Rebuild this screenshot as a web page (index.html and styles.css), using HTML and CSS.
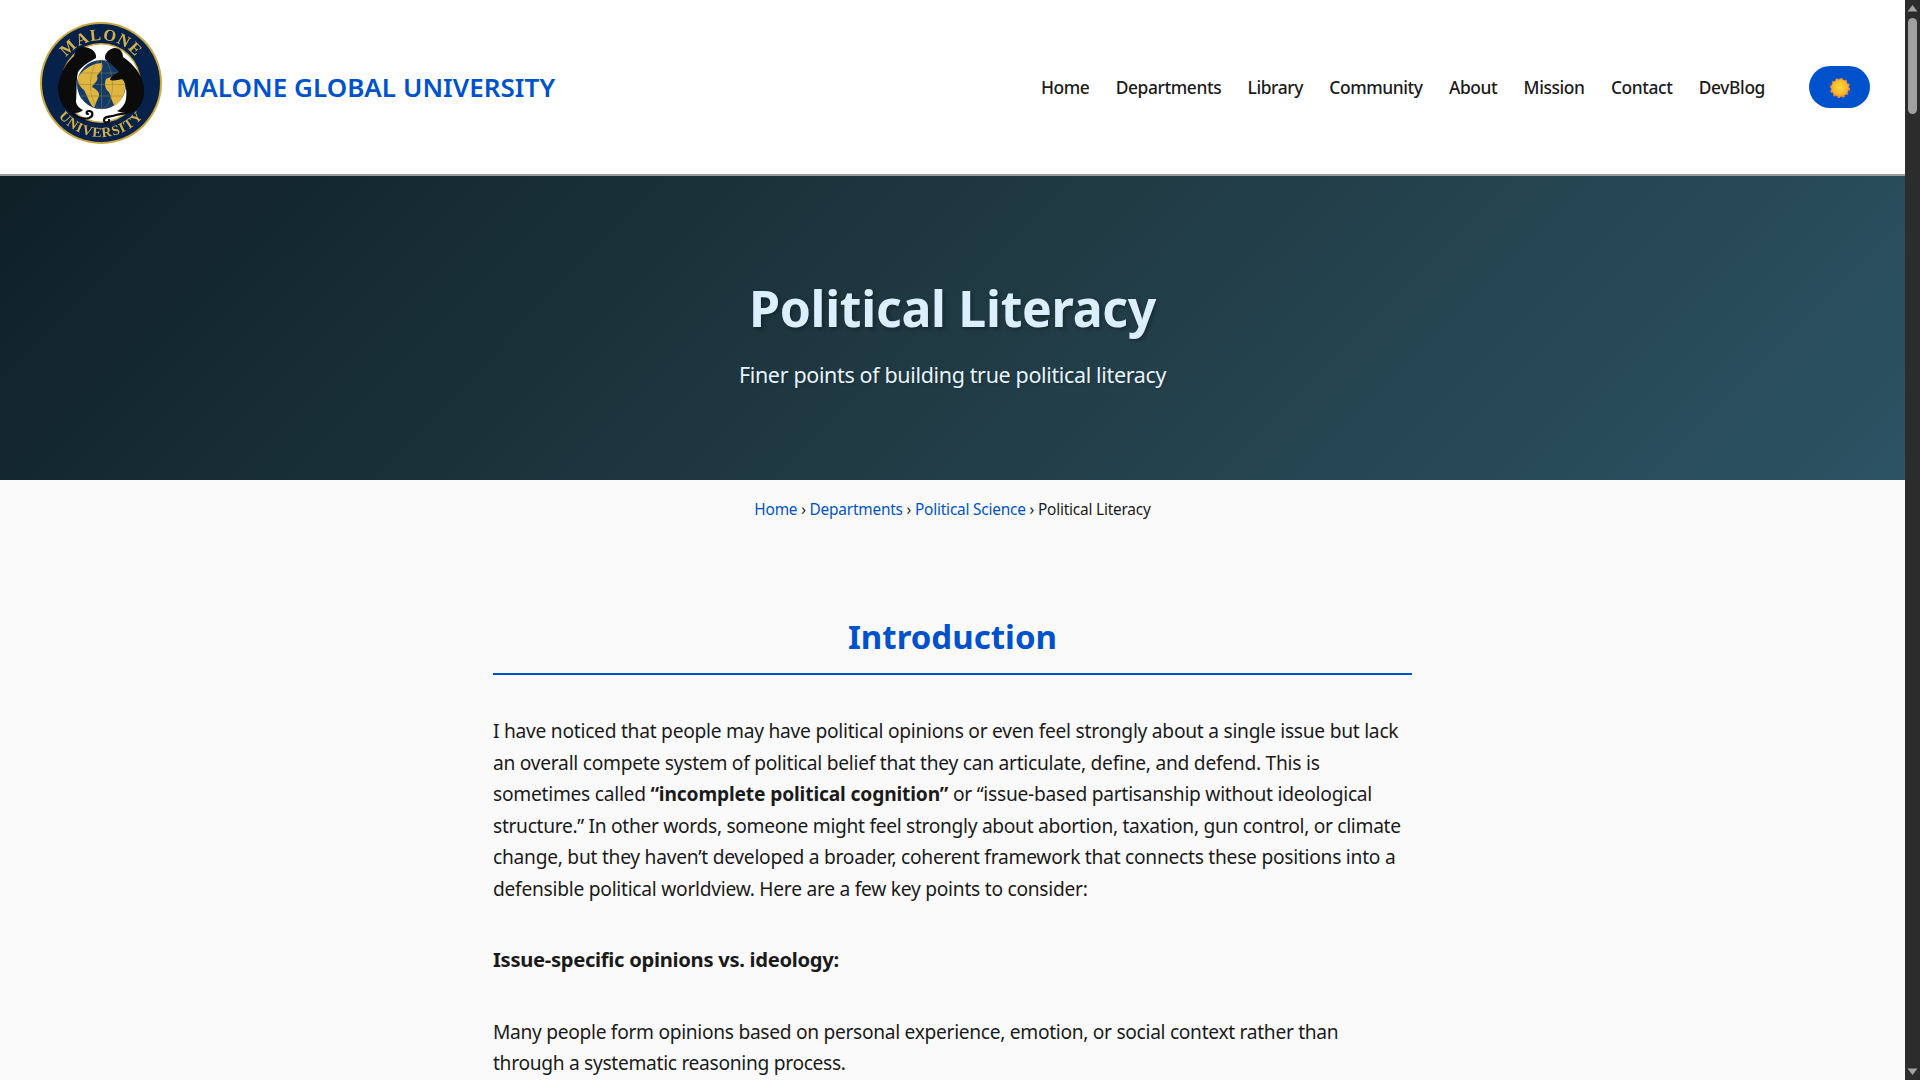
FILE: index.html
```html
<!DOCTYPE html>
<html lang="en">
<head>
<meta charset="utf-8">
<title>Political Literacy</title>
<link rel="stylesheet" href="styles.css">
</head>
<body>
<div class="page">
  <header class="site-header">
    <a class="brand" href="#">
      <svg class="logo" viewBox="-65 -65 130 130" aria-label="Malone University seal">
        <defs>
          <path id="arcTop" d="M-43,0 A43,43 0 0 1 43,0"/>
          <path id="arcBottom" d="M-54,0 A54,54 0 0 0 54,0"/>
        </defs>
        <g class="seal">
          <circle r="61" fill="#c9a63f"/>
          <circle r="59" fill="#06214a"/>
          <circle r="40" fill="#c9a63f"/>
          <circle r="38.5" fill="#ffffff"/>
          <circle cx=".5" cy="1.5" r="24.5" fill="#123a6b"/>
          <path d="M-23,-6 C-16,-16 -6,-20 1,-20 C3,-13 -2,-11 -4,-7 C-2,-2 -7,0 -9,4 C-5,6 -1,9 -2,13 C-4,18 -6,22 -7,25 C-12,20 -14,12 -17,7 C-20,5 -24,0 -23,-6 Z" fill="#e0b540"/>
          <path d="M5,-4 C12,-8 21,-7 24,0 C25,8 22,17 14,23 C11,20 10,13 8,9 C4,7 3,0 5,-4 Z" fill="#e0b540"/>
          <g fill="none" stroke="#8f8138" stroke-width=".5">
            <ellipse cx=".5" cy="1.5" rx="11" ry="24.5"/>
            <path d="M.5,-23 V26 M-23,1.5 H24 M-20,-10 H21 M-20,13 H21"/>
          </g>
          <path d="M-5,-25 C-4,-31 -10,-36 -18,-36 C-23,-36 -26,-32 -27,-27 C-36,-19 -43,-6 -43,7 C-42,17 -38,25 -31,29 C-26,31 -21,30 -18,27 C-22,25 -25,22 -25,18 C-24,8 -25,-3 -23,-11 C-18,-18 -12,-21 -5,-25 Z" fill="#0b0b0b"/>
          <path d="M4,-24 C3,-30 9,-35 14,-35 C19,-35 22,-31 22,-26 C33,-19 44,-5 43,9 C43,18 39,25 33,28 C29,30 21,30 16,28 C20,26 24,22 25,16 C26,8 25,2 22,-4 C17,-3 12,-2 9,-3 C10,-7 14,-9 18,-11 C14,-16 9,-20 4,-24 Z" fill="#0b0b0b"/>
          <g fill="none" stroke="#0b0b0b" stroke-width="2.2" stroke-linecap="round">
            <path d="M-33,26 C-29,33 -20,37 -12,35 C-7,33 -8,28 -12,28 C-15,28 -15,31 -13,31"/>
            <path d="M34,26 C30,31 22,30 15,32 C9,34 3,33 3,37 C3,41 9,40 8,37"/>
          </g>
          <text class="seal-top"><textPath href="#arcTop" startOffset="50%">MALONE</textPath></text>
          <text class="seal-bottom"><textPath href="#arcBottom" startOffset="50%">UNIVERSITY</textPath></text>
        </g>
      </svg>
      <span class="brand-name">MALONE GLOBAL UNIVERSITY</span>
    </a>
    <div class="header-right">
      <nav class="main-nav">
        <a href="#">Home</a>
        <a href="#">Departments</a>
        <a href="#">Library</a>
        <a href="#">Community</a>
        <a href="#">About</a>
        <a href="#">Mission</a>
        <a href="#">Contact</a>
        <a href="#">DevBlog</a>
      </nav>
      <button class="theme-toggle" type="button" aria-label="Toggle theme">
        <svg class="sun" viewBox="-12 -12 24 24">
          <defs>
            <radialGradient id="sunFill" cx="50%" cy="45%" r="55%">
              <stop offset="0" stop-color="#ffd93a"/>
              <stop offset=".7" stop-color="#fbb92c"/>
              <stop offset="1" stop-color="#f18a2c"/>
            </radialGradient>
          </defs>
          <circle r="8.6" fill="none" stroke="#ee8a2e" stroke-width="3" stroke-dasharray="2.3 2.2"/>
          <circle r="9" fill="url(#sunFill)"/>
        </svg>
      </button>
    </div>
  </header>

  <section class="hero">
    <h1>Political Literacy</h1>
    <p>Finer points of building true political literacy</p>
  </section>

  <main class="content">
    <nav class="breadcrumb">
      <a href="#">Home</a> › <a href="#">Departments</a> › <a href="#">Political Science</a> › <span>Political Literacy</span>
    </nav>
    <article class="article">
      <h2>Introduction</h2>
      <p>I have noticed that people may have political opinions or even feel strongly about a single issue but lack<br>
      an overall compete system of political belief that they can articulate, define, and defend. This is<br>
      sometimes called <strong>“incomplete political cognition”</strong> or “issue-based partisanship without ideological<br>
      <span class="tight">structure.” In other words, someone might feel strongly about abortion, taxation, gun control, or climate</span><br>
      change, but they haven’t developed a broader, coherent framework that connects these positions into a<br>
      defensible political worldview. Here are a few key points to consider:</p>
      <h3>Issue-specific opinions vs. ideology:</h3>
      <p class="tight">Many people form opinions based on personal experience, emotion, or social context rather than<br>
      through a systematic reasoning process.</p>
    </article>
  </main>
</div>
<aside class="scrollbar" aria-hidden="true">
  <svg class="scroll-arrow" viewBox="0 0 15 17"><path d="M7.5,5 L12.5,11.5 H2.5 Z" fill="#a3a3a3"/></svg>
  <div class="scroll-track"><div class="scroll-thumb"></div></div>
  <svg class="scroll-arrow" viewBox="0 0 15 17"><path d="M7.5,12 L12.5,5.5 H2.5 Z" fill="#a3a3a3"/></svg>
</aside>
</body>
</html>
```

FILE: styles.css
```css
* { box-sizing: border-box; }
html, body { height: 100%; }
body {
  margin: 0;
  display: flex;
  overflow: hidden;
  font-family: "Noto Sans", "Open Sans", sans-serif;
  color: #1a1a1a;
  background: #fafafa;
}
a { text-decoration: none; color: inherit; }

.page { flex: 1; min-width: 0; height: 100vh; overflow: hidden; }

.site-header {
  height: 176px;
  padding: 0 35px 0 36px;
  display: flex;
  align-items: center;
  justify-content: space-between;
  background: #fff;
  border-bottom: 2px solid #9a9a9a;
}
.brand { display: flex; align-items: center; gap: 10px; }
.logo { width: 130px; height: 130px; margin-bottom: 8px; display: block; }
.seal { filter: blur(.45px); }
.seal-top, .seal-bottom {
  font-family: "Liberation Serif", serif;
  font-weight: 700;
  fill: #d4af4a;
  text-anchor: middle;
}
.seal-top { font-size: 16.5px; letter-spacing: 1px; }
.seal-bottom { font-size: 14px; letter-spacing: 1px; }
.brand-name {
  font-size: 26px;
  font-weight: 600;
  color: #0052cc;
  white-space: nowrap;
  letter-spacing: .05px;
}
.header-right { display: flex; align-items: center; gap: 44px; }
.main-nav {
  display: flex;
  gap: 26.3px;
  font-size: 17.4px;
  font-weight: 500;
  color: #1a1a1a;
  white-space: nowrap;
  letter-spacing: -.4px;
}
.theme-toggle {
  width: 61px;
  height: 42px;
  border: 0;
  padding: 0;
  border-radius: 21px;
  background: #0052cc;
  display: flex;
  align-items: center;
  justify-content: center;
}
.sun { width: 24px; height: 24px; display: block; margin-top: 2px; }

.hero {
  height: 304px;
  display: flex;
  flex-direction: column;
  align-items: center;
  color: #e8f4fd;
  background: linear-gradient(135deg, #0f2027, #203a43, #2c5364);
  padding-top: 107px;
}
.hero h1 {
  margin: 0;
  font-size: 50px;
  line-height: 1;
  font-weight: 700;
  color: #dcefff;
  letter-spacing: -.3px;
  text-shadow: 2px 2px 4px rgba(0,0,0,.3);
}
.hero p {
  margin: 27px 0 0;
  font-size: 21.5px;
  line-height: 30px;
  letter-spacing: -.36px;
  text-shadow: 1px 1px 2px rgba(0,0,0,.2);
}

.breadcrumb {
  padding-top: 18px;
  text-align: center;
  font-size: 15.4px;
  line-height: 24px;
  letter-spacing: -.2px;
  color: #1a1a1a;
}
.breadcrumb a { color: #0052cc; }

.article { width: 919px; margin: 0 auto; padding-top: 89px; }
.article h2 {
  margin: 0 0 40px;
  padding-bottom: 10px;
  border-bottom: 2px solid #0052cc;
  text-align: center;
  font-size: 33px;
  line-height: 52px;
  font-weight: 700;
  color: #0052cc;
}
.article p {
  margin: 0;
  font-size: 19.2px;
  line-height: 31.6px;
  letter-spacing: -.26px;
  white-space: nowrap;
}
.article strong { font-weight: 700; letter-spacing: -.14px; }
.article .tight { letter-spacing: -.31px; }
.article h3 {
  margin: 39px 0 42px;
  font-size: 20.2px;
  line-height: 30px;
  font-weight: 700;
  letter-spacing: -.3px;
}

.scrollbar {
  flex: 0 0 15px;
  height: 100vh;
  background: #2c2c2c;
  display: flex;
  flex-direction: column;
}
.scroll-arrow { width: 15px; height: 17px; display: block; flex: none; }
.scroll-track { flex: 1; padding: 1px 3px 0; }
.scroll-thumb { height: 96px; border-radius: 5px; background: #a0a0a0; }
```
